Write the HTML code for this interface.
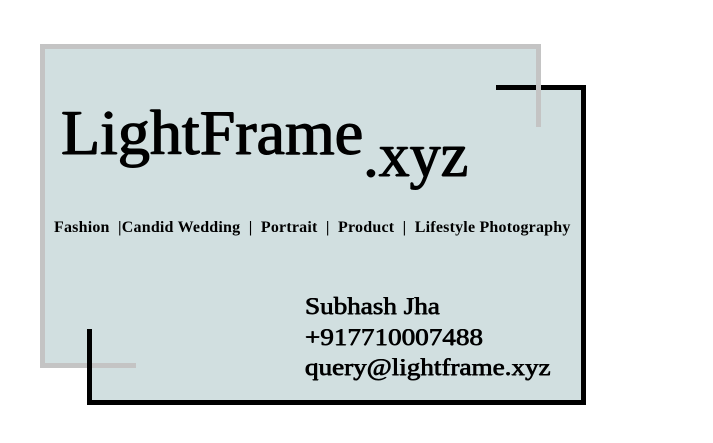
<!DOCTYPE html>
<html><head><style>
body{margin:0;width:713px;height:443px;background:#fff;position:relative;overflow:hidden;font-family:"Liberation Serif",serif;color:#000}
.a{position:absolute}
</style></head><body>
<div class="a" style="left:45px;top:49px;width:491px;height:314px;background:#d1dfe0"></div>
<div class="a" style="left:92px;top:90px;width:489px;height:310px;background:#d1dfe0"></div>
<div class="a" style="left:496px;top:85px;width:90px;height:5px;background:#000"></div>
<div class="a" style="left:581px;top:85px;width:5px;height:320px;background:#000"></div>
<div class="a" style="left:87px;top:400px;width:499px;height:5px;background:#000"></div>
<div class="a" style="left:40px;top:44px;width:501px;height:5px;background:#c4c4c4"></div>
<div class="a" style="left:536px;top:44px;width:5px;height:83px;background:#c4c4c4"></div>
<div class="a" style="left:40px;top:44px;width:5px;height:324px;background:#c4c4c4"></div>
<div class="a" style="left:40px;top:363px;width:96px;height:5px;background:#c4c4c4"></div>
<div class="a" style="left:87px;top:329px;width:5px;height:76px;background:#000"></div>

<div class="a" style="left:61px;top:96px;font-size:64px;line-height:74px;white-space:nowrap;text-shadow:0.7px 0 0 #000,-0.7px 0 0 #000,0 0.6px 0 #000,0 -0.6px 0 #000">LightFrame<span style="font-size:62px;position:relative;top:22px">.xyz</span></div>
<div class="a" style="left:54px;top:218px;font-size:16px;font-weight:bold;letter-spacing:0.2px;line-height:20px;white-space:nowrap">Fashion &nbsp;|Candid Wedding &nbsp;| &nbsp;Portrait &nbsp;| &nbsp;Product &nbsp;| &nbsp;Lifestyle Photography</div>
<div class="a" style="left:305px;top:292px;font-size:24px;line-height:30.5px;white-space:nowrap;text-shadow:0.4px 0 0 #000,-0.4px 0 0 #000,0 0.3px 0 #000;transform:scaleX(1.13);transform-origin:0 0">Subhash Jha<br>+917710007488<br>query@lightframe.xyz</div>
</body></html>
